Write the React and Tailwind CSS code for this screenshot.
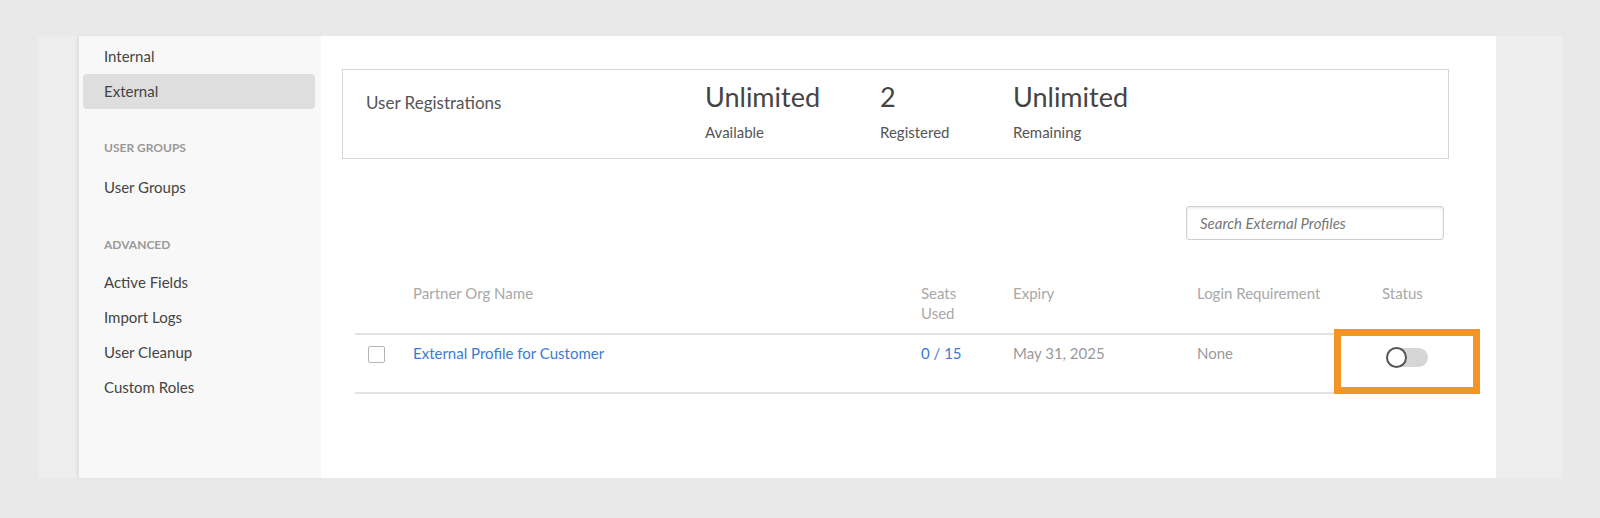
import { useState } from "react";

const advanced = ["Active Fields", "Import Logs", "User Cleanup", "Custom Roles"];

function Stat({ value, label, width }) {
  return (
    <div className={`${width} pt-[11px]`}>
      <div className="text-[27px] leading-[32px] text-[#444]">{value}</div>
      <div className="mt-[9px] text-[15px] leading-[20px] text-[#555]">{label}</div>
    </div>
  );
}

export default function App() {
  const [active, setActive] = useState(false);

  return (
    <div className="h-[518px] w-[1600px] bg-[#e9e9e9] px-[38px] pt-[36px] font-[Lato,sans-serif]">
      <div className="flex h-[442px]">
        <div className="w-[41px] bg-[#ededed]" />

        {/* Sidebar */}
        <aside className="w-[242px] bg-[#f8f8f8] pt-[3px] pl-[4px] pr-[6px] text-[15px] text-[#444] shadow-[-2px_0_3px_rgba(0,0,0,0.06)]">
          <div className="flex h-[35px] items-center pl-[21px]">Internal</div>
          <div className="flex h-[35px] items-center rounded-[4px] bg-[#dedede] pl-[21px]">External</div>

          <div className="mt-[29px] flex h-[20px] items-center pl-[21px] text-[12px] font-bold uppercase text-[#999]">
            User Groups
          </div>
          <div className="mt-[12px] flex h-[35px] items-center pl-[21px]">User Groups</div>

          <div className="mt-[30px] flex h-[20px] items-center pl-[21px] text-[12px] font-bold uppercase text-[#999]">
            Advanced
          </div>
          <div className="mt-[10px]">
            {advanced.map(item => (
              <div key={item} className="flex h-[35px] items-center pl-[21px]">
                {item}
              </div>
            ))}
          </div>
        </aside>

        {/* Main */}
        <main className="relative w-[1175px] bg-white pl-[21px] pr-[47px] pt-[33px]">
          <div className="flex h-[90px] items-start border border-[#d5d5d5] pl-[23px]">
            <div className="w-[339px] pt-[21px] text-[17px] leading-[24px] text-[#555]">User Registrations</div>
            <Stat value="Unlimited" label="Available" width="w-[175px]" />
            <Stat value="2" label="Registered" width="w-[133px]" />
            <Stat value="Unlimited" label="Remaining" width="w-[150px]" />
          </div>

          <div className="mt-[47px] flex justify-end pr-[5px]">
            <input
              readOnly
              placeholder="Search External Profiles"
              className="h-[34px] w-[258px] rounded-[3px] border border-[#cfcfcf] pl-[13px] text-[15px] shadow-[inset_0_1px_3px_rgba(0,0,0,0.1)] outline-none placeholder:italic placeholder:text-[#777]"
            />
          </div>

          {/* Table */}
          <div className="ml-[13px] mt-[43px] w-[1119px] text-[15px] leading-[20px]">
            <div className="flex border-b-2 border-[#e2e2e2] pb-[10px] text-[#a8a8a8]">
              <div className="w-[58px]" />
              <div className="w-[508px]">Partner Org Name</div>
              <div className="w-[92px]">
                Seats
                <br />
                Used
              </div>
              <div className="w-[184px]">Expiry</div>
              <div className="w-[185px]">Login Requirement</div>
              <div className="flex-1">Status</div>
            </div>

            <div className="flex h-[59px] items-start border-b-2 border-[#e2e2e2] pt-[8px]">
              <div className="w-[58px] pl-[13px]">
                <div className="mt-[3px] h-[17px] w-[17px] rounded-[2px] border-[1.5px] border-[#b5b5b5] bg-white" />
              </div>
              <div className="w-[508px] text-[#3a7bd5]">External Profile for Customer</div>
              <div className="w-[92px] text-[#3a7bd5]">0 / 15</div>
              <div className="w-[184px] text-[#9a9a9a]">May 31, 2025</div>
              <div className="w-[185px] text-[#9a9a9a]">None</div>
              <div className="flex-1 pl-[4px]">
                <button
                  onClick={() => setActive(!active)}
                  className={`mt-[5px] flex h-[19px] w-[42px] items-center rounded-full ${active ? "justify-end bg-[#3a7bd5]" : "bg-[#d6d6d6]"}`}
                >
                  <span className="h-[21px] w-[21px] shrink-0 rounded-full border-2 border-[#555] bg-white" />
                </button>
              </div>
            </div>
          </div>

          {/* Highlight annotation */}
          <div className="absolute left-[1013px] top-[293px] h-[65px] w-[146px] border-[7px] border-[#f29526]" />
        </main>

        <div className="flex-1 bg-[#eeeeee]" />
      </div>
    </div>
  );
}
